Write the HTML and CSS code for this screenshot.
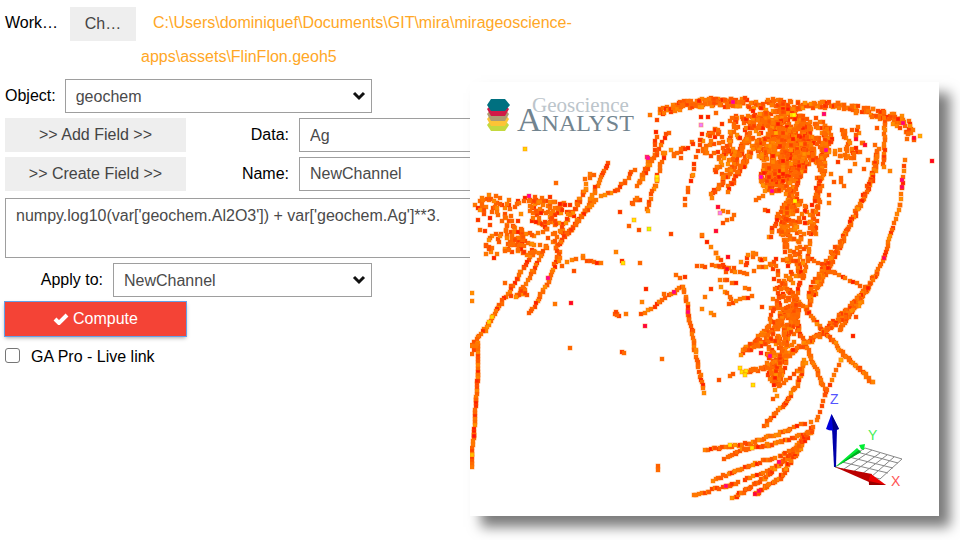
FILE: index.html
```html
<!DOCTYPE html>
<html lang="en">
<head>
<meta charset="utf-8">
<title>Calculator</title>
<link rel="stylesheet" href="styles.css">
</head>
<body>
<main class="app">
  <form class="form">
    <div class="row file">
      <span class="label">Work…</span>
      <button type="button" class="btn choose">Ch…</button>
      <output class="path">C:\Users\dominiquef\Documents\GIT\mira\mirageoscience-apps\assets\FlinFlon.geoh5</output>
    </div>
    <div class="row">
      <label class="label" for="object">Object:</label>
      <span class="select">
        <select id="object" class="field"><option>geochem</option></select>
        <svg class="chevron" viewBox="0 0 14 10"><path d="M2 2l5 5 5-5"/></svg>
      </span>
    </div>
    <div class="row">
      <button type="button" class="btn wide">&gt;&gt; Add Field &gt;&gt;</button>
      <label class="label side" for="data">Data:</label>
      <select id="data" class="field grow"><option>Ag</option></select>
    </div>
    <div class="row">
      <button type="button" class="btn wide">&gt;&gt; Create Field &gt;&gt;</button>
      <label class="label side" for="name">Name:</label>
      <input id="name" class="field grow" type="text" value="NewChannel">
    </div>
    <textarea class="field code" aria-label="Equation">numpy.log10(var['geochem.Al2O3']) + var['geochem.Ag']**3.</textarea>
    <div class="row">
      <label class="label apply" for="apply">Apply to:</label>
      <span class="select">
        <select id="apply" class="field"><option>NewChannel</option></select>
        <svg class="chevron" viewBox="0 0 14 10"><path d="M2 2l5 5 5-5"/></svg>
      </span>
    </div>
    <button type="button" class="btn wide compute">
      <svg class="check" viewBox="0 0 16 12"><path d="M2 6l4 4 8-8"/></svg>Compute
    </button>
    <label class="live"><input type="checkbox" class="tick">GA Pro - Live link</label>
  </form>
  <section class="viewer">
    <svg class="scene" viewBox="470 82 469 434" role="img">
      <g id="points" class="points"></g>
      <g class="logo">
        <path fill="#c4d93f" d="M491 120h14l4 5-4 6h-14l-4-6z"/>
        <path fill="#fdc436" d="M491 114h14l4 5-4 7h-14l-4-7z"/>
        <path fill="#ad9b72" d="M491 109h14l4 5-4 7h-14l-4-7z"/>
        <path fill="#d11947" d="M491 105h14l4 4-4 7h-14l-4-7z"/>
        <path fill="#007080" d="M491 99h14l5 6-5 6h-14l-4-6z"/>
        <text class="geo" x="532" y="112">Geoscience</text>
        <text class="analyst" x="517" y="131"><tspan class="cap">A</tspan>NALYST</text>
      </g>
      <g class="axes">
        <path class="grid" d="M835 467L865 448L902 459L880 479zM842 462L888 473M849 457L893 468M857 452L898 463M844 469L872 450M853 472L880 453M862 474L887 455M871 477L894 457"/>
        <path fill="#00a" d="M834 467L832 428h5L836 467z"/>
        <path fill="#00d" d="M831.500 414L826 429q6 3 13 0z"/>
        <path fill="#008" d="M831.500 414L833 430q4 0 6-1z"/>
        <path fill="#0e3" d="M835 467L857 448l4 4zM859 445l6-1-1 6-3-1z"/>
        <path fill="#0a2" d="M836 467L861 452l-2-2z"/>
        <path fill="#b00" d="M835 467L872 474l-3 8z"/>
        <path fill="#e00" d="M871 474L886 485 869 485q-1-5 2-11z"/>
        <path fill="#900" d="M886 485l-17 0v-4z"/>
        <text x="830" y="404" fill="#55f">Z</text>
        <text x="868" y="440" fill="#4e5">Y</text>
        <text x="891" y="486" fill="#f55">X</text>
      </g>
    </svg>
  </section>
</main>
<script src="points.js"></script>
</body>
</html>
```
FILE: styles.css
```css
* { box-sizing: border-box; }
body {
  margin: 0;
  background: #fff;
  color: #000;
  font: 16px/34px "Liberation Sans", Arial, sans-serif;
}
.app {
  display: grid;
  grid-template-columns: minmax(0, 470fr) minmax(0, 469fr);
  align-items: start;
  min-height: 100vh;
  padding-right: 21px;
}
.form {
  display: flex;
  flex-direction: column;
  align-items: flex-start;
  gap: 5px;
  padding: 6px 0 0 5px;
  width: 586px;
}
.row { display: flex; width: 100%; }
.label { margin-right: 9px; white-space: nowrap; }
.side { width: 93px; margin: 0 10px 0 10px; text-align: right; }
.apply { width: 98px; margin-right: 10px; text-align: right; }
.file .label { width: 55px; margin-right: 10px; }
.btn {
  height: 34px;
  border: 0;
  padding: 0;
  background: #eee;
  color: #444;
  font: inherit;
  line-height: 32px;
}
.choose { width: 66px; margin-top: 1px; }
.wide { width: 181px; }
.path {
  flex: 1;
  max-width: 440px;
  padding-left: 5px;
  color: #ffa726;
  text-indent: 12px;
}
.field {
  height: 34px;
  margin: 0;
  padding: 0 10px;
  border: 1px solid #9e9e9e;
  border-radius: 0;
  background: #fff;
  color: #4a4a4a;
  font: inherit;
  appearance: none;
  outline: none;
}
.grow { flex: 1; }
.select { position: relative; display: flex; width: 307px; }
.apply + .select { width: 259px; }
.select .field { width: 100%; }
.chevron {
  position: absolute;
  right: 6px;
  top: 12px;
  width: 14px;
  height: 10px;
  fill: none;
  stroke: #111;
  stroke-width: 3;
  pointer-events: none;
}
.code {
  width: 100%;
  height: 60px;
  margin-top: 2px;
  padding: 6px 10px;
  line-height: 22px;
  resize: none;
}
.compute {
  background: #f44336;
  color: #fff;
  outline: 1px solid #64a0e8;
  box-shadow: 0 2px 4px rgba(0, 0, 0, .35);
}
.check {
  width: 16px;
  height: 12px;
  margin-right: 4px;
  vertical-align: -1px;
  fill: none;
  stroke: #fff;
  stroke-width: 4;
}
.live { display: flex; align-items: center; line-height: 32px; }
.tick {
  width: 15px;
  height: 15px;
  margin: 0 11px 4px 0;
  border: 1px solid #767676;
  border-radius: 3px;
  appearance: none;
}
.viewer {
  position: relative;
  z-index: 1;
  margin-top: 82px;
  background: #fff;
  box-shadow: 11px 11px 12px rgba(0, 0, 0, .52);
}
.scene {
  display: block;
  width: 100%;
  font: 14px "Liberation Sans", Arial, sans-serif;
}
.points { stroke: #ff7000; stroke-opacity: .4; stroke-width: 1; }
.geo { font: 21px "Liberation Serif", serif; fill: #bcc5cb; }
.analyst { font: 24px "Liberation Serif", serif; fill: #72848f; }
.cap { font-size: 34px; }
.grid { fill: none; stroke: #888; stroke-width: 1; }
```
FILE: points.js
```js
// Drillhole samples: [jitter, density, x1, y1, x2, y2, ...]
const traces = [
  [1, 1.5, 608,163, 586,210, 556,248], [1, 1.2, 596,200, 556,247], [2, .9, 585,190, 556,240],
  [1, 1.5, 560,252, 547,285, 530,313], [1, 1.2, 547,245, 533,272, 517,297],
  [1, 1.5, 532,255, 500,305, 485,330, 470,347],
  [1, 1.2, 634,170, 618,190, 602,196], [1, 1.4, 650,160, 637,185], [1, 1, 587,189, 575,208],
  [1, .8, 524,201, 555,202, 570,205],
  [4, 4, 660,111, 690,104, 720,101, 746,103], [4, 2.4, 685,105, 745,102],
  [4, 3.6, 750,106, 770,103, 800,106, 830,105, 858,109, 880,114, 900,120],
  [5, 3.6, 895,118, 908,128, 910,137], [3, 2.2, 730,119, 765,117],
  [1, 1.1, 668,132, 655,155, 640,182], [1, .9, 656,132, 656,155],
  [1, 1.1, 664,155, 655,185, 647,212], [1, .7, 702,134, 692,175, 684,205],
  [2, 1.8, 736,118, 728,150, 714,172], [1.5, 2.2, 745,140, 735,165, 711,197],
  [2, 2, 757,140, 742,168, 727,190], [2, 1.6, 757,145, 738,172],
  [3, 2, 753,122, 738,155, 722,180],
  [3, 1.4, 665,150, 678,155, 693,142],
  [2, 1, 785,165, 775,182, 757,200], [3, 1, 768,150, 770,190],
  [5, 3, 757,112, 785,128, 795,150, 770,175],
  [8, 4, 755,115, 765,125, 790,135, 810,130], [6, 2, 778,140, 777,180],
  [3, 3, 806,135, 799,170, 790,205, 780,235],
  [4, 3.6, 828,125, 824,160, 817,190, 812,235],
  [3, 1.7, 798,150, 790,180, 786,220, 784,245],
  [1, 1.2, 885,118, 884,167],
  [1.5, 2.6, 878,150, 872,180, 858,208, 843,240, 828,268, 807,308],
  [2, 2, 842,240, 825,265, 808,298],
  [0, .75, 905,160, 900,205, 893,228], [0, 1.2, 892,230, 884,258, 877,272],
  [1, 2.4, 877,272, 868,288, 850,314, 840,330],
  [1.5, 2.6, 868,288, 845,311, 820,335, 795,350, 765,368, 748,372],
  [1, 1.6, 862,302, 835,325, 820,335],
  [1, 1, 808,257, 835,273, 868,289],
  [1, 1.8, 780,281, 808,312, 825,333, 850,360, 873,383],
  [1, 1.8, 797,325, 806,347, 826,392],
  [1, 1, 811,240, 808,257, 803,275, 795,300],
  [2, 1.6, 788,200, 778,217, 770,237],
  [5, 1.5, 792,205, 786,235, 790,260], [6, 1.3, 800,205, 798,265],
  [3, 2.8, 796,300, 770,330, 742,354], [4, 2.8, 792,310, 765,337, 744,352],
  [4, 3.2, 797,305, 785,345, 777,375], [4, 1.6, 777,360, 776,397],
  [2, 1.8, 778,337, 755,347], [3, 1.4, 768,375, 785,360, 795,345],
  [1, 1.1, 642,315, 660,302, 683,287],
  [1, 1.3, 684,287, 690,320, 695,350, 704,392],
  [1, .9, 697,265, 720,267, 735,268], [1, 1, 716,253, 727,272], [0, .5, 702,236, 716,253],
  [4, 1.8, 743,262, 755,257, 777,263], [1, 1, 732,272, 748,274], [2, .9, 754,269, 777,267],
  [1, .9, 720,279, 736,283], [1, 1, 722,288, 731,300], [1, 1, 729,303, 752,297],
  [1, .9, 723,211, 733,214], [1, .7, 723,223, 732,218],
  [1, 1.6, 765,426, 785,403, 798,383, 805,360],
  [1, 1, 781,385, 797,372, 806,362],
  [1, 1.6, 706,450, 750,443, 790,430], [1, .7, 790,429, 816,420],
  [1, 1.7, 725,458, 745,449, 770,445, 810,433],
  [1, 1.5, 714,480, 735,471, 775,457], [1, 1.2, 744,480, 770,470, 800,451],
  [1, 1.5, 694,495, 730,485, 738,482], [1, 2, 733,498, 765,478, 785,460, 812,428],
  [1.5, 2.4, 755,494, 780,478, 795,455, 812,428],
  [2, 1.6, 780,457, 800,447],
  [0, .7, 818,417, 825,395, 841,360],
  [0, 1.2, 478,343, 478,375, 476,400, 474,435, 470,467], [1, 1, 470,353, 478,343],
  [2, 1.4, 584,255, 585,262], [1, 1.2, 590,261, 601,263], [1, 1, 567,261, 576,259],
  [2, 1.2, 558,252, 560,265]
];

// Sample clouds: [cx, cy, rx, ry, count]
const clouds = [
  [527, 222, 50, 25, 100], [512, 240, 14, 14, 40], [548, 212, 20, 18, 34], [490, 204, 20, 7, 22],
  [532, 250, 18, 8, 22], [494, 247, 13, 14, 11], [785, 145, 28, 38, 420], [812, 140, 20, 24, 120],
  [775, 178, 15, 15, 95], [748, 130, 14, 16, 30],
  [712, 142, 12, 14, 30], [852, 137, 14, 12, 16], [848, 152, 14, 7, 20], [795, 230, 14, 38, 60],
  [785, 315, 16, 26, 55], [776, 362, 10, 22, 70], [522, 293, 8, 5, 10], [620, 314, 7, 3, 6],
  [789, 270, 16, 18, 28], [590, 178, 10, 7, 5], [633, 199, 9, 5, 6], [728, 156, 12, 8, 18],
  [875, 162, 14, 14, 7], [840, 170, 12, 20, 7], [782, 295, 10, 12, 18]
];

// Isolated samples
const dots = [
  650,115, 657,120, 701,117, 708,117, 716,113, 722,124, 556,183, 550,197, 489,195,
  496,196, 517,204, 472,293, 472,301, 555,304, 574,271, 616,252, 622,261, 640,263,
  646,289, 642,302, 620,212, 629,226, 639,230, 570,348, 622,352, 624,353, 662,359,
  719,380, 730,376, 733,374, 658,466, 658,470, 797,426, 853,336, 856,317,
  671,234, 702,235, 765,210, 768,211, 711,289, 705,297, 702,309, 711,313, 714,315,
  745,288, 749,289, 762,307, 676,275, 680,278, 685,277, 664,294, 775,289, 774,279,
  505,283, 497,254, 511,296, 844,186, 829,195, 829,203, 855,164, 890,171, 875,145,
  877,128, 787,208
];
const tinted = [
  525,149,"#ffd400", 634,220,"#ffe600", 649,229,"#d8ff00", 623,263,"#ffe600", 529,196,"#ff00a0",
  647,157,"#ff00b0", 648,158,"#ff00b0", 718,207,"#ff0048", 720,213,"#f080ff", 716,231,"#ff0048",
  645,326,"#ff0048", 571,303,"#ff0030", 548,278,"#ff0090", 688,312,"#ff0080", 701,125,"#f080ff",
  733,102,"#ff00a0", 761,177,"#ff00c0",
  772,191,"#ff00a0", 792,115,"#ffee00", 824,114,"#ff0080", 826,150,"#ff00a0", 903,123,"#ff0080",
  902,180,"#ff0080", 902,187,"#ff0060", 884,258,"#ff0060", 728,257,"#ff0030", 727,269,"#ff0030",
  657,177,"#ffff00", 657,180,"#ffe000", 492,317,"#ffd400", 489,322,"#ffd400", 471,455,"#ffc000",
  740,368,"#ffe600", 742,372,"#ffe600", 746,371,"#ffe600", 745,375,"#ffe600", 753,385,"#ffe600",
  770,356,"#ff00a0", 761,353,"#ff0040", 755,494,"#ff0040", 759,491,"#ff0060", 726,486,"#ff0080",
  779,462,"#ff0080", 730,445,"#ffe600", 752,448,"#ffe600", 932,161,"#ff0028", 920,136,"#ffb000",
  914,138,"#ff0040", 795,201,"#ffff00", 794,115,"#ffff00", 856,139,"#ff0040", 865,145,"#ff0040",
  674,292,"#ff0080", 474,436,"#ff1010", 477,381,"#ff2a00", 841,360,"#ffae00", 776,133,"#ffb000"
];

const palette = ["#ff6a00", "#ff6a00", "#ff6000", "#ff6600", "#ff7800", "#ff7800", "#ff8600",
  "#ff4a00", "#ff5500", "#ff3000", "#ff9200", "#ff1c00", "#ff4000"];

let seed = 7;
function rand() {
  seed = (seed * 1103515245 + 12345) % 2147483648;
  return seed / 2147483648;
}

const layer = document.getElementById("points");
const left = 470;
function plot(x, y, color) {
  const r = document.createElementNS("http://www.w3.org/2000/svg", "rect");
  r.setAttribute("x", Math.max(left, Math.round(x) - 2));
  r.setAttribute("y", Math.round(y) - 2);
  r.setAttribute("width", 4);
  r.setAttribute("height", 4);
  r.setAttribute("fill", color || palette[Math.floor(rand() * palette.length)]);
  layer.appendChild(r);
}

for (const [cx, cy, rx, ry, n] of clouds) {
  for (let i = 0; i < n; i++) {
    const a = rand() * Math.PI * 2;
    const d = Math.sqrt(rand());
    plot(cx + Math.cos(a) * d * rx, cy + Math.sin(a) * d * ry);
  }
}
for (const [jitter, density, ...p] of traces) {
  for (let i = 0; i + 3 < p.length; i += 2) {
    const dx = p[i + 2] - p[i];
    const dy = p[i + 3] - p[i + 1];
    const n = Math.max(1, Math.round(Math.hypot(dx, dy) / 4 * density));
    for (let k = 0; k <= n; k++) {
      plot(p[i] + dx * k / n + (rand() * 2 - 1) * jitter,
           p[i + 1] + dy * k / n + (rand() * 2 - 1) * jitter);
    }
  }
}
for (let i = 0; i < dots.length; i += 2) plot(dots[i], dots[i + 1]);
for (let i = 0; i < tinted.length; i += 3) plot(tinted[i], tinted[i + 1], tinted[i + 2]);
```
